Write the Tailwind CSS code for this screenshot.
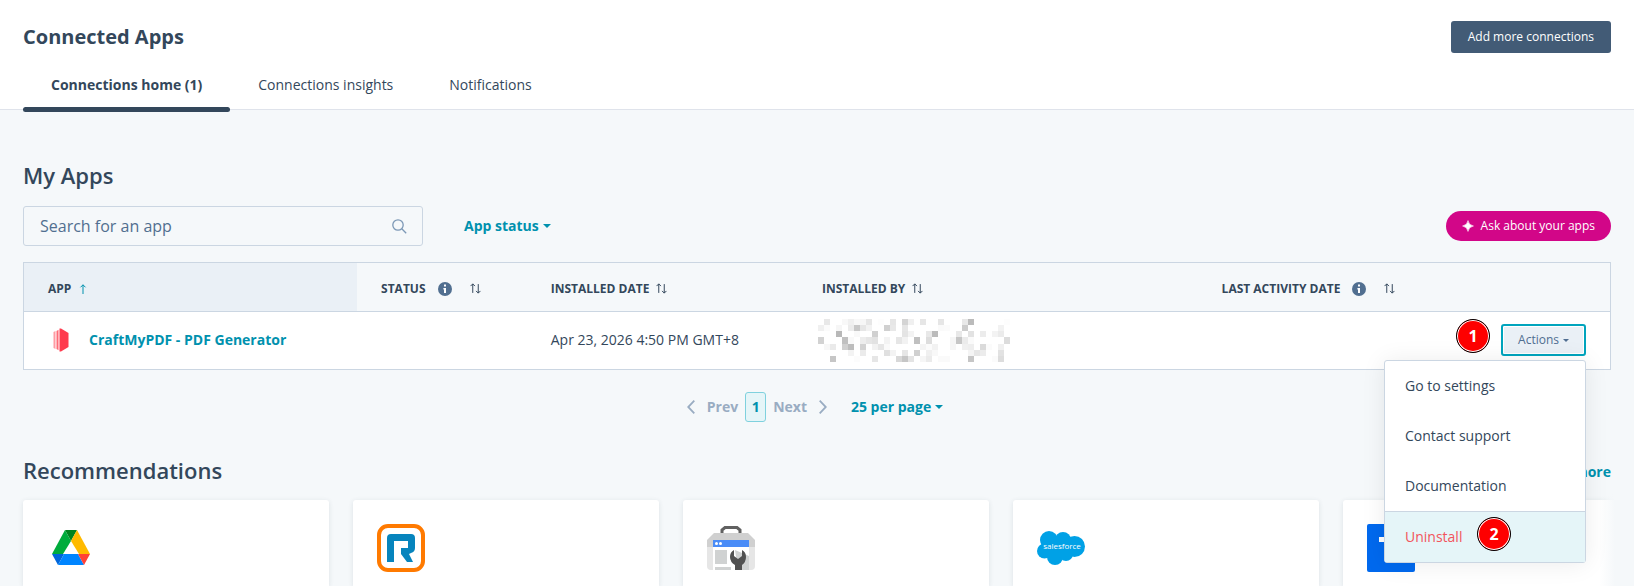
<!DOCTYPE html>
<html lang="en">
<head>
  <meta charset="UTF-8" />
  <meta name="viewport" content="width=device-width, initial-scale=1.0"/>
  <title>Connected Apps</title>
  <script src="https://cdn.jsdelivr.net/npm/@tailwindcss/browser@4"></script>
</head>
<body class="flex h-screen flex-col overflow-hidden bg-[#f5f8fa] font-['Open_Sans',sans-serif] text-sm text-[#33475b]">

  <!-- Shared icons -->
  <svg class="hidden">
    <symbol id="sort" viewBox="0 0 10 10"><path d="M2.5 9V.8M.5 2.8l2-2 2 2M7.5 1v8.2M5.5 7.2l2 2 2-2" fill="none" stroke="currentColor" stroke-width=".9"/></symbol>
    <symbol id="info" viewBox="0 0 14 14"><circle cx="7" cy="7" r="7" fill="#516f90"/><path d="M6 2.6h2v2H6zM5.4 6H8v5H6V7.4h-.6z" fill="#fff"/></symbol>
    <symbol id="caret" viewBox="0 0 8 4"><path d="M0 0h8L4 4z" fill="currentColor"/></symbol>
  </svg>

  <!-- Header -->
  <header class="border-b border-[#dfe3eb] bg-white px-[23px] pt-[21px]">
    <div class="flex h-8 items-center justify-between">
      <h1 class="text-xl leading-7 font-bold">Connected Apps</h1>
      <button class="h-8 rounded-[3px] bg-[#425b76] px-[17px] text-xs text-white">Add more connections</button>
    </div>
    <nav class="flex">
      <a href="#" class="relative px-7 pt-5 pb-3 leading-6 font-bold">Connections home (1)
        <span class="absolute inset-x-0 -bottom-[3px] h-[5px] rounded-sm bg-[#33475b]"></span>
      </a>
      <a href="#" class="px-7 pt-5 pb-3 leading-6">Connections insights</a>
      <a href="#" class="px-7 pt-5 pb-3 leading-6">Notifications</a>
    </nav>
  </header>

  <main class="flex min-h-0 flex-1 flex-col px-[23px] pt-[49px]">
    <h2 class="text-[22px] leading-8 font-semibold">My Apps</h2>

    <!-- Filters -->
    <div class="mt-[15px] flex items-center">
      <div class="relative w-[400px]">
        <input type="text" aria-label="Search for an app" placeholder="Search for an app" class="h-10 w-full rounded-[3px] border border-[#cbd6e2] bg-[#f5f8fa] pr-10 pl-4 text-base placeholder-[#516f90]" />
        <svg class="absolute top-[13px] right-4 size-[15px]" viewBox="0 0 15 15" fill="none" stroke="#7c98b6" stroke-width="1.3"><circle cx="6" cy="6" r="5.2"/><path d="M9.8 9.8l4.4 4.4"/></svg>
      </div>
      <button class="ml-[41px] flex items-center gap-1 font-bold text-[#0091ae]">App status <svg class="h-1 w-2"><use href="#caret"/></svg></button>
      <button class="ml-auto flex h-[30px] items-center gap-[7px] rounded-full bg-[#d20688] px-4 text-xs text-white">
        <svg class="size-3" viewBox="0 0 12 12" fill="#fff"><path d="M6 .5Q6.8 5.2 11.5 6 6.8 6.8 6 11.5 5.2 6.8.5 6 5.2 5.2 6 .5z" stroke="#fff" stroke-width=".5"/></svg>
        Ask about your apps
      </button>
    </div>

    <!-- Apps table -->
    <div class="relative mt-4 border border-[#cbd6e2]">
      <table class="w-full table-fixed text-left">
        <thead class="text-xs">
          <tr class="h-12 border-b border-[#cbd6e2]">
            <th class="w-[21%] bg-[#eaf0f6] px-6 pt-1 font-bold"><div class="flex items-center gap-2">APP <svg class="h-2.5 w-2 text-[#0091ae]" viewBox="0 0 8 10" fill="none" stroke="currentColor"><path d="M4 10V.8M1.5 3.3L4 .8l2.5 2.5"/></svg></div></th>
            <th class="w-[10.7%] px-6 pt-1 font-bold"><div class="flex items-center">STATUS <svg class="ml-3 size-3.5 shrink-0"><use href="#info"/></svg><svg class="ml-[18px] size-[11px] shrink-0"><use href="#sort"/></svg></div></th>
            <th class="w-[17.1%] px-6 pt-1 font-bold"><div class="flex items-center gap-[7px]">INSTALLED DATE <svg class="size-[11px]"><use href="#sort"/></svg></div></th>
            <th class="w-[25.2%] px-6 pt-1 font-bold"><div class="flex items-center gap-[7px]">INSTALLED BY <svg class="size-[11px]"><use href="#sort"/></svg></div></th>
            <th class="px-6 pt-1 font-bold"><div class="flex items-center">LAST ACTIVITY DATE <svg class="ml-3 size-3.5 shrink-0"><use href="#info"/></svg><svg class="ml-[18px] size-[11px] shrink-0"><use href="#sort"/></svg></div></th>
            <th class="w-[140px]"></th>
          </tr>
        </thead>
        <tbody class="bg-white">
          <tr class="h-[58px]">
            <td class="px-6">
              <div class="flex items-center gap-[14px]">
                <svg class="h-6 w-[27px]" viewBox="0 0 27 24"><path d="M5.5 4l2-1v18l-2-1z" fill="#ff9ba3"/><path d="M8.5 3l2-1.2v20.4L8.500 21z" fill="#ff6b77"/><path d="M11.5.5H13L20.500 5v14L13 23.500h-1.500z" fill="#ff3b4e"/></svg>
                <a href="#" class="font-bold text-[#0091ae]">CraftMyPDF - PDF Generator</a>
              </div>
            </td>
            <td></td>
            <td class="px-6 whitespace-nowrap">Apr 23, 2026 4:50 PM GMT+8</td>
            <td class="px-5"><svg id="mosaic" class="h-[43px] w-48" viewBox="0 0 32 7" preserveAspectRatio="none" shape-rendering="crispEdges"></svg></td>
            <td></td>
            <td class="pr-6">
              <div class="relative flex justify-end">
                <span class="absolute -top-[5px] right-24 flex size-[34px] items-center justify-center rounded-full border border-black bg-[#fe0000] font-['Noto_Sans',sans-serif] text-base font-bold text-white inset-ring inset-ring-white">1</span>
                <button class="flex h-8 items-center gap-1 rounded-[3px] border-2 border-[#00a4bd] bg-[#eaf0f6] px-[15px] text-xs text-[#506e91] inset-ring inset-ring-white">Actions <svg class="h-[3px] w-1.5" viewBox="0 0 8 4"><path d="M0 0h8L4 4z" fill="currentColor"/></svg></button>
              </div>
            </td>
          </tr>
        </tbody>
      </table>

      <!-- Actions menu -->
      <div class="absolute top-[97px] right-6 z-10 flex w-[202px] flex-col rounded-[3px] border border-[#cbd6e2] bg-white shadow-[0_1px_24px_rgba(0,0,0,0.08)]">
        <button class="h-[50px] px-5 text-left">Go to settings</button>
        <button class="h-[50px] px-5 text-left">Contact support</button>
        <button class="h-[50px] px-5 text-left">Documentation</button>
        <button class="relative h-[51px] border-t border-[#cbd6e2] bg-[#e5f5f8] px-5 text-left text-[#f2545b]">Uninstall
          <span class="absolute top-[5px] left-[92px] flex size-[34px] items-center justify-center rounded-full border border-black bg-[#fe0000] font-['Noto_Sans',sans-serif] text-base font-bold text-white inset-ring inset-ring-white">2</span>
        </button>
      </div>
    </div>

    <!-- Pagination -->
    <div class="mt-[22px] flex items-center justify-center pr-1 font-bold text-[#99acc2]">
      <button class="flex items-center gap-3"><svg class="h-3.5 w-2" viewBox="0 0 8 14" fill="none" stroke="currentColor" stroke-width="1.8"><path d="M7.3.7L1.2 7l6.1 6.3"/></svg>Prev</button>
      <button class="mx-[7px] h-[30px] w-[21px] rounded-[3px] border border-[#7fd1de] bg-[#e5f5f8] text-[#0091ae]">1</button>
      <button class="flex items-center gap-3">Next<svg class="h-3.5 w-2" viewBox="0 0 8 14" fill="none" stroke="currentColor" stroke-width="1.8"><path d="M.7.7L6.8 7 .7 13.3"/></svg></button>
      <button class="ml-6 flex items-center gap-1 text-[#0091ae]">25 per page <svg class="h-1 w-2"><use href="#caret"/></svg></button>
    </div>

    <!-- Recommendations -->
    <div class="mt-8 flex items-center justify-between">
      <h2 class="text-[22px] leading-8 font-semibold">Recommendations</h2>
      <a href="#" class="pt-1 font-bold text-[#0091ae]">View more</a>
    </div>
    <div class="relative -mx-2 mt-1.5 flex min-h-0 flex-1 gap-6 overflow-hidden px-2 pt-2">
      <article class="w-[306px] shrink-0 rounded-t-[3px] bg-white px-6 pt-6 shadow-[0_1px_5px_rgba(45,62,80,0.12)]">
        <svg class="size-12" viewBox="0 0 48 48"><path d="M18 6h12l-6 11z" fill="#00831e"/><path d="M18 6l6 11-8 13H5z" fill="#00ac3c"/><path d="M30 6l13 24H32l-8-13z" fill="#ffba00"/><path d="M5 30h12l-6 11z" fill="#0066da"/><path d="M17 30h14l6 11H11z" fill="#0085ff"/><path d="M31 30h12l-6 11z" fill="#ff4136"/></svg>
      </article>
      <article class="w-[306px] shrink-0 rounded-t-[3px] bg-white px-6 pt-6 shadow-[0_1px_5px_rgba(45,62,80,0.12)]">
        <svg class="size-12" viewBox="0 0 48 48"><rect x="2" y="2" width="44" height="44" rx="9" fill="#fff" stroke="#ff7a00" stroke-width="4"/><path d="M10 38V14q0-4 4-4h20q4 0 4 4v10q0 4-4 5l-2 1 4 8h-6l-6-8v-6h7v-7H17v21z" fill="#0684bd"/></svg>
      </article>
      <article class="w-[306px] shrink-0 rounded-t-[3px] bg-white px-6 pt-6 shadow-[0_1px_5px_rgba(45,62,80,0.12)]">
        <svg class="size-12" viewBox="0 0 48 48"><path d="M15 10V6l3-2.5h12L33 6v4" fill="none" stroke="#616161" stroke-width="3"/><path d="M0 23v-7l7-7h34l7 7v7z" fill="#d0d0d0"/><path d="M0 23h48v19q0 4-4 4H4q-4 0-4-4z" fill="#e6e6e6"/><path d="M6 23h36v23H6z" fill="#fff"/><path d="M6 16h36v7H6z" fill="#4a8cf7"/><circle cx="9.5" cy="19.5" r="1.5" fill="#fff"/><circle cx="13.5" cy="19.5" r="1.5" fill="#fff"/><path d="M8 26h12v14H8zM8 43h16v3H8zM28 26l14 6v14H31z" fill="#d0d2d2"/><path d="M27 26v6l4 3 4-3v-6q4 2 4 7t-4 8v5h-7v-5q-5-3-5-8t4-7z" fill="#515151"/></svg>
      </article>
      <article class="w-[306px] shrink-0 rounded-t-[3px] bg-white px-6 pt-6 shadow-[0_1px_5px_rgba(45,62,80,0.12)]">
        <svg class="size-12" viewBox="0 0 48 48"><g fill="#00a1e6"><circle cx="12" cy="16" r="9"/><circle cx="26" cy="16" r="8"/><circle cx="37.5" cy="22.5" r="10.5"/><circle cx="7.5" cy="27" r="7.5"/><circle cx="18" cy="33" r="8"/><circle cx="29" cy="30" r="7"/><path d="M10 16h25v14H10z"/></g><text x="25" y="25" fill="#fff" text-anchor="middle" font-size="8">salesforce</text></svg>
      </article>
      <article class="w-[306px] shrink-0 rounded-t-[3px] bg-white px-6 pt-6 shadow-[0_1px_5px_rgba(45,62,80,0.12)]">
        <svg class="size-12" viewBox="0 0 48 48"><rect width="48" height="48" rx="2" fill="#0169ee"/><path d="M12 13h24v5H27v18h-6V18h-9z" fill="#fff"/></svg>
      </article>
      <div class="absolute inset-y-0 right-0 w-5 bg-linear-to-r from-transparent to-[#f5f8fa] to-80%"></div>
    </div>
  </main>

  <script>
    // masked name: [column, grey level] for each row of blocks
    const rows = [
      [[1,'e8'],[4,'f8'],[5,'f0'],[6,'f8'],[7,'f6'],[8,'e6'],[10,'fd'],[12,'e6'],[14,'d4'],[15,'f0'],[17,'e6'],[20,'e6'],[24,'e8'],[25,'bb'],[31,'fd']],
      [[0,'f0'],[1,'fb'],[3,'f6'],[5,'ec'],[6,'c8'],[7,'e6'],[8,'f2'],[11,'d0'],[12,'e8'],[14,'e6'],[20,'fa'],[21,'fb'],[24,'cc'],[30,'f2']],
      [[3,'b8'],[6,'f9'],[9,'d0'],[14,'e4'],[15,'f3'],[18,'e8'],[19,'bb'],[23,'e8'],[25,'e2'],[27,'ec'],[29,'f3'],[30,'eb']],
      [[0,'d2'],[4,'c0'],[5,'f9'],[7,'ed'],[8,'e6'],[9,'e2'],[11,'f3'],[13,'e6'],[14,'f2'],[16,'c0'],[18,'dd'],[22,'f6'],[23,'c6'],[24,'eb'],[25,'fa'],[31,'dc']],
      [[1,'f7'],[2,'ea'],[4,'d0'],[5,'bd'],[7,'d2'],[9,'f2'],[10,'e6'],[11,'fa'],[17,'f4'],[18,'fb'],[19,'f2'],[22,'f6'],[24,'f0'],[25,'ee'],[27,'da'],[28,'fb'],[30,'f0']],
      [[5,'f3'],[7,'eb'],[11,'e0'],[12,'f3'],[14,'e6'],[16,'d0'],[18,'f0'],[19,'f8'],[25,'f4'],[26,'e6'],[27,'ec'],[30,'e2']],
      [[2,'c6'],[6,'fc'],[9,'e6'],[13,'d8'],[14,'c6'],[15,'e4'],[17,'f6'],[18,'eb'],[20,'fa'],[21,'fa'],[25,'c6'],[29,'fb'],[30,'dd']]
    ];
    document.getElementById('mosaic').innerHTML = rows.map((row, y) =>
      row.map(([x, c]) => `<rect x="${x}" y="${y}" width="1" height="1" fill="#${c}${c}${c}"/>`).join('')
    ).join('');
  </script>
</body>
</html>
